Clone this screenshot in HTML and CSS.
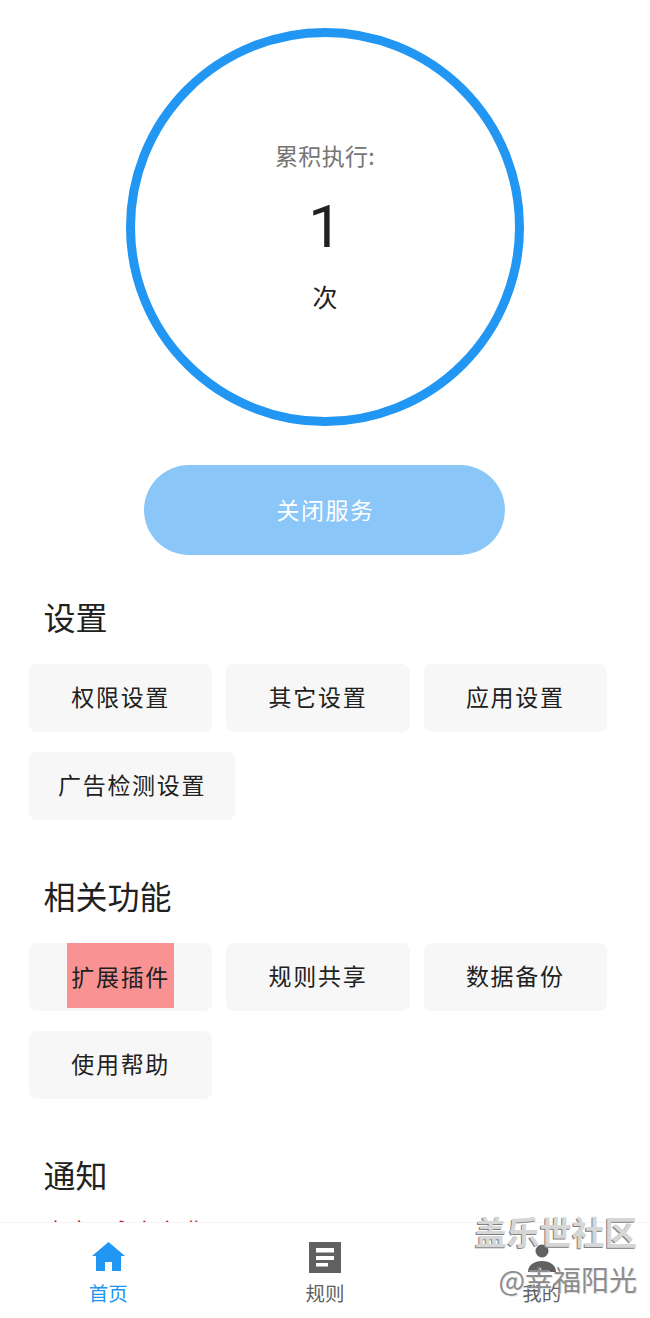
FILE: index.html
```html
<!DOCTYPE html>
<html lang="zh-CN">
<head>
  <meta charset="UTF-8">
  <meta name="viewport" content="width=device-width, initial-scale=1.0">
  <title>首页</title>
  <link rel="stylesheet" href="styles.css">
</head>
<body>
  <div class="page">
    <main class="content">
      <div class="counter">
        <div class="counter-label">累积执行:</div>
        <div class="counter-value">1</div>
        <div class="counter-unit">次</div>
      </div>
      <button class="service-btn">关闭服务</button>

      <h2 class="section-title">设置</h2>
      <div class="btn-group">
        <button class="item-btn">权限设置</button>
        <button class="item-btn">其它设置</button>
        <button class="item-btn">应用设置</button>
        <button class="item-btn">广告检测设置</button>
      </div>

      <h2 class="section-title">相关功能</h2>
      <div class="btn-group">
        <button class="item-btn item-btn-marked"><span class="mark">扩展插件</span></button>
        <button class="item-btn">规则共享</button>
        <button class="item-btn">数据备份</button>
        <button class="item-btn">使用帮助</button>
      </div>

      <h2 class="section-title">通知</h2>
      <p class="notice">本应用永久免费</p>
    </main>

    <nav class="tabbar">
      <a class="tab tab-active">
        <svg class="tab-icon" viewBox="0 0 34 34"><path d="M17.500 1 1 15h4v15h9V21h7v9h9V15h4z" fill="#2196f3"/></svg>
        <span>首页</span>
      </a>
      <a class="tab">
        <svg class="tab-icon" viewBox="0 0 34 34"><path d="M1 1h32v31H1z" fill="#616161"/><path d="M8 7h18v4.500H8zM8 15h18v4H8zM8 22h12v3.500H8z" fill="#fff"/></svg>
        <span>规则</span>
      </a>
      <a class="tab">
        <svg class="tab-icon" viewBox="0 0 34 34"><circle cx="17" cy="10" r="6.500" fill="#616161"/><path d="M3 31c0-7 6-11 14-11s14 4 14 11z" fill="#616161"/></svg>
        <span>我的</span>
      </a>
    </nav>

    <!-- 水印 -->
    <div class="watermark">
      <div class="wm-title">盖乐世社区</div>
      <div class="wm-user">@幸福阳光</div>
    </div>
  </div>
</body>
</html>
```

FILE: styles.css
```css
html, body {
  margin: 0;
  padding: 0;
  background: #fff;
  font-family: "Noto Sans CJK SC", "Liberation Sans", sans-serif;
}

.page {
  position: relative;
  height: 1318px;
  display: flex;
  flex-direction: column;
  overflow: hidden;
}

.content {
  flex: 1;
  min-height: 0;
  overflow: hidden;
  padding: 28px 29px 0;
}

/* 计数圆环 */
.counter {
  box-sizing: border-box;
  width: 398px;
  height: 398px;
  margin: 0 auto;
  border: 9px solid #2196f3;
  border-radius: 50%;
  display: flex;
  flex-direction: column;
  align-items: center;
}
.counter-label {
  margin-top: 101px;
  font-size: 23px;
  line-height: 34px;
  letter-spacing: 0.3px;
  color: #757575;
}
.counter-value {
  margin-top: 21px;
  font-family: Roboto, sans-serif;
  font-size: 60px;
  line-height: 68px;
  color: #212121;
}
.counter-unit {
  margin-top: 18px;
  font-size: 25px;
  line-height: 34px;
  color: #212121;
}

.service-btn {
  display: block;
  width: 361px;
  height: 90px;
  margin: 39px 0 0 115px;
  padding: 0 0 2px 2px;
  border: none;
  border-radius: 45px;
  background: #8ac7f8;
  color: #fff;
  font-family: inherit;
  font-size: 23px;
  letter-spacing: 1.5px;
}

.section-title {
  margin: 38px 0 0 14.500px;
  font-size: 32px;
  font-weight: 400;
  line-height: 46px;
  color: #212121;
}
.btn-group + .section-title {
  margin-top: 52px;
}

.btn-group {
  display: flex;
  flex-wrap: wrap;
  gap: 20px 14px;
  margin-top: 25px;
}
.item-btn {
  min-width: 183.330px;
  height: 68px;
  padding: 0 29px 4px;
  border: none;
  border-radius: 8px;
  background: #f7f7f7;
  color: #212121;
  font-family: inherit;
  font-size: 23px;
  letter-spacing: 1.700px;
}
.item-btn-marked {
  padding-bottom: 3px;
}
.mark {
  display: inline-block;
  vertical-align: top;
  height: 65px;
  padding: 0 4px;
  line-height: 67px;
  background: #f99393;
}

.notice {
  margin: 16px 0 0 15px;
  font-size: 23px;
  line-height: 34px;
  color: #b71c1c;
}

/* 底部导航 */
.tabbar {
  height: 95px;
  border-top: 1px solid #f3f3f3;
  background: #fff;
  display: flex;
}
.tab {
  flex: 1;
  display: flex;
  flex-direction: column;
  align-items: center;
  padding-top: 18px;
  font-size: 19.500px;
  line-height: 26px;
  color: #616161;
}
.tab-active {
  color: #2196f3;
}
.tab-icon {
  width: 34px;
  height: 34px;
  margin-bottom: 5px;
}

.watermark {
  position: absolute;
  right: 13px;
  bottom: 21px;
  text-align: right;
}
.wm-title {
  font-size: 32.500px;
  line-height: 44px;
  font-weight: 700;
  color: #d6d6d6;
  text-shadow: -1px 1px 0 #808080;
}
.wm-user {
  margin-top: 8px;
  font-size: 28px;
  line-height: 36px;
  color: #8c8c8c;
  text-shadow: 1px 1px 0 #e6e6e6;
}
```
